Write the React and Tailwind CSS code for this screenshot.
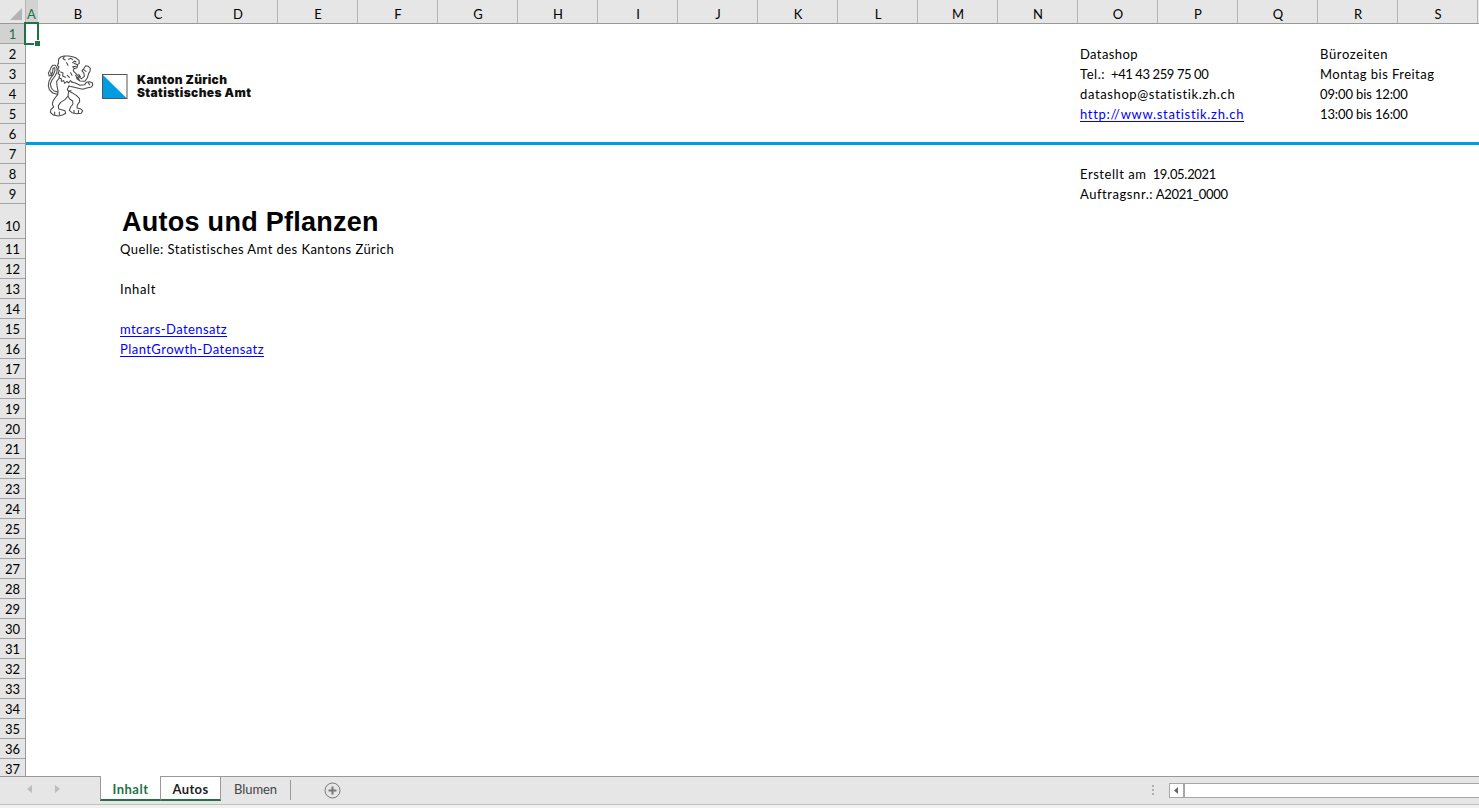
const COLUMNS = 'ABCDEFGHIJKLMNOPQRS'.split('');
const ROWS = Array.from({ length: 37 }, (_, i) => i + 1);

const CELLS = {
  2: [
    { text: 'Datashop', place: 'col-start-15', spacing: 'tracking-[0.38px]' },
    { text: 'Bürozeiten', place: 'col-start-18', spacing: 'tracking-[0.65px]' },
  ],
  3: [
    { label: 'Tel.:', text: '  +41 43 259 75 00', place: 'col-start-15', spacing: 'tracking-[-0.4px]' },
    { text: 'Montag bis Freitag', place: 'col-start-18', spacing: 'tracking-[0.46px]' },
  ],
  4: [
    { text: 'datashop@statistik.zh.ch', place: 'col-start-15', spacing: 'tracking-[0.62px]' },
    { text: '09:00 bis 12:00', place: 'col-start-18', spacing: 'tracking-[-0.12px]' },
  ],
  5: [
    { text: 'http://www.statistik.zh.ch', place: 'col-start-15', spacing: 'tracking-[0.68px]', link: true },
    { text: '13:00 bis 16:00', place: 'col-start-18', spacing: 'tracking-[-0.12px]' },
  ],
  8: [{ label: 'Erstellt am', text: '  19.05.2021', place: 'col-start-15', spacing: 'tracking-[-0.3px]' }],
  9: [{ label: 'Auftragsnr.:', text: ' A2021_0000', place: 'col-start-15', spacing: 'tracking-[-0.31px]' }],
  10: [{ text: 'Autos und Pflanzen', place: 'col-start-3', title: true }],
  11: [{ text: 'Quelle: Statistisches Amt des Kantons Zürich', place: 'col-start-3', spacing: 'tracking-[0.45px]' }],
  13: [{ text: 'Inhalt', place: 'col-start-3', spacing: 'tracking-[0.65px]' }],
  15: [{ text: 'mtcars-Datensatz', place: 'col-start-3', spacing: 'tracking-[0.42px]', link: true }],
  16: [{ text: 'PlantGrowth-Datensatz', place: 'col-start-3', spacing: 'tracking-[0.45px]', link: true }],
};

function Cell({ label, text, place, link, title, spacing = '' }) {
  if (title) {
    return (
      <span className={`${place} pl-1 font-['Liberation_Sans',sans-serif] text-[27px] leading-[36px] font-bold tracking-[0.27px] whitespace-pre`}>
        {text}
      </span>
    );
  }
  return (
    <span className={`${place} ${spacing} pl-0.5 leading-[20px] whitespace-pre`}>
      {label && <span className="tracking-[0.56px]">{label}</span>}
      {link ? (
        <a className="text-[#0000ff] underline decoration-1 underline-offset-[2px] [text-decoration-skip-ink:none]">{text}</a>
      ) : (
        text
      )}
    </span>
  );
}

function ColumnHeaders() {
  return (
    <div className="flex h-6 shrink-0 border-b border-[#999] bg-[#e6e6e6] text-center">
      <div className="flex w-[26px] shrink-0 items-end justify-end border-r border-[#b5b5b5] pr-[3px] pb-[3px]">
        <svg width="12" height="12" viewBox="0 0 12 12">
          <path d="M12 0V12H0Z" fill="#b3b3b3" />
        </svg>
      </div>
      {COLUMNS.map((c) => (
        <div
          key={c}
          className={
            c === 'A'
              ? 'w-3 shrink-0 bg-[#d2d2d2] pt-1 pr-px leading-[20px] text-[#217346]'
              : 'w-20 shrink-0 border-r border-[#b5b5b5] pt-1 pl-px leading-[20px]'
          }
        >
          {c}
        </div>
      ))}
      <div className="w-px" />
    </div>
  );
}

function Lion() {
  return (
    <svg width="60" height="72" viewBox="0 0 180 216" fill="none" stroke="#4a4a4a" strokeWidth="3.2" strokeLinejoin="round" strokeLinecap="round">
      <path d="M55 40L56 27L62 21L72 18L86 18L98 20L108 24L117 31L118 40L112 44L102 40M98 38L104 33L108 36" />
      <path d="M113 46L111 53L103 56L98 50L109 49M100 58L101 64L108 71L116 80L124 86" />
      <path d="M73 20L69 26L76 30M86 28L93 25L98 29M80 38L84 46" />
      <path d="M55 40L52 47L57 51L53 58L58 62L54 71L60 74L57 83L64 86L64 94L71 92L74 100L81 94L86 99L91 92L96 96" />
      <path d="M62 66L69 69L68 78L76 82M82 76L88 82M92 68L96 76" />
      <path d="M124 86L133 80L132 70L126 62L132 55L137 47L145 49L151 55L150 64L146 70L142 84L134 94L120 93L110 86M131 59L138 64M116 73L121 80L113 82L118 90M107 76L112 87" />
      <path d="M95 96L106 99L120 106L134 104L139 97L148 95L157 98L158 106L152 112L140 114L128 118L112 114L96 110L86 108M145 99L149 104" />
      <path d="M54 126L42 123L34 114L31 102L36 90L45 78L51 66L51 54L46 46L38 46L33 53L30 61L25 69L28 78L34 76L32 66M34 76L38 66L39 55L44 53L45 62L40 74L32 84L27 94L25 107L28 119L38 129L52 133" />
      <path d="M58 84L50 94L51 108L54 122L53 134L45 144L39 154L37 163L41 171L33 178L31 187L40 195L55 198L68 195L77 190L75 182L65 179L56 177L55 167L62 157L75 149L84 138L86 123" />
      <path d="M86 123L96 128L109 136L118 145L119 155L112 165L111 174L121 176L128 182L124 190L110 191L96 188L88 181L92 171L99 162L98 153L89 147L84 139" />
      <path d="M87 108L82 118L86 124L93 122M44 186L44 194M58 186L58 194M102 181L102 188M116 181L115 189" />
    </svg>
  );
}

function Letterhead() {
  return (
    <div className="absolute top-[26px] left-[14px] flex">
      <Lion />
      <svg className="mt-6 ml-0.5" width="26" height="25" viewBox="0 0 26 25">
        <rect x=".5" y=".5" width="24.5" height="24" fill="#fff" stroke="#555" />
        <path d="M1 1L24.5 24H1Z" fill="#009ee0" />
      </svg>
      <p className="mt-[23px] ml-[9px] flex flex-col font-['Inter',sans-serif] text-[12px] leading-[13px] font-black whitespace-nowrap text-[#111]">
        <span className="tracking-[0.3px]">Kanton Zürich</span>
        <span className="tracking-[0.36px]">Statistisches Amt</span>
      </p>
    </div>
  );
}

function TabBar() {
  return (
    <div className="flex h-8 shrink-0 flex-col bg-[#f0f0f0] text-[13px] leading-[26px]">
      <div className="flex h-[29px] border-b border-[#c0c0c0] bg-[#e6e6e6]">
        <div className="flex w-[100px] shrink-0 items-center gap-[23px] border-t border-[#999] pb-1 pl-[27px]">
          <svg width="5" height="8" viewBox="0 0 5 8"><path d="M5 0V8L0 4Z" fill="#bdbdbd" /></svg>
          <svg width="5" height="8" viewBox="0 0 5 8"><path d="M0 0V8L5 4Z" fill="#bdbdbd" /></svg>
        </div>
        <div className="h-[25px] w-[60px] shrink-0 border-b-2 border-l border-b-[#217346] border-l-[#999] bg-white text-center font-bold tracking-[0.5px] text-[#217346]">
          Inhalt
        </div>
        <div className="h-[25px] w-[61px] shrink-0 border-x border-t border-b-2 border-[#999] border-b-[#217346] bg-white text-center leading-[25px] font-bold tracking-[0.35px] text-[#222]">
          Autos
        </div>
        <div className="flex grow items-start border-t border-[#999]">
          <div className="mt-[3px] h-5 w-[70px] border-r border-[#999] text-center leading-[19px] tracking-[-0.1px] text-[#444]">Blumen</div>
          <svg className="mt-[5px] ml-[33px]" width="17" height="17" viewBox="0 0 17 17" fill="none" stroke="#777">
            <circle cx="8.5" cy="8.5" r="7.5" />
            <path d="M8.5 4.5V12.5M4.5 8.5H12.5" strokeWidth="2" />
          </svg>
          <div className="mt-2 ml-auto flex flex-col gap-0.5 pr-[15px]">
            <i className="size-0.5 bg-[#b0b0b0]" />
            <i className="size-0.5 bg-[#b0b0b0]" />
            <i className="size-0.5 bg-[#b0b0b0]" />
          </div>
          <div className="mt-[6px] flex h-[15px] w-[310px] shrink-0 border-y border-l border-[#a6a6a6] bg-white">
            <div className="flex w-[15px] items-center justify-center border-r-2 border-[#a6a6a6] pr-px">
              <svg width="4" height="7" viewBox="0 0 4 7"><path d="M4 0V7L0 3.5Z" fill="#666" /></svg>
            </div>
          </div>
        </div>
      </div>
    </div>
  );
}

export default function App() {
  return (
    <div className="flex h-[808px] w-[1479px] flex-col overflow-hidden bg-white font-['Lato',sans-serif] text-[13px] text-black">
      <ColumnHeaders />
      <div className="flex h-[752px] shrink-0">
        <div className="flex w-[26px] shrink-0 flex-col overflow-hidden border-r border-[#999] bg-[#e6e6e6] text-center">
          {ROWS.map((n) => (
            <div
              key={n}
              className={`flex shrink-0 items-end justify-center border-b border-[#a5a5a5] leading-[18px] ${n === 10 ? 'h-[35px] pb-[3px]' : 'h-5'} ${n === 1 ? 'bg-[#d2d2d2] text-[#217346]' : ''}`}
            >
              {n}
            </div>
          ))}
        </div>
        <div className="relative flex grow flex-col">
          {ROWS.slice(0, 36).map((n) => (
            <div
              key={n}
              className={`grid shrink-0 grid-cols-[12px_repeat(18,80px)] ${n === 10 ? 'h-[35px]' : 'h-5'}`}
            >
              {(CELLS[n] || []).map((cell) => (
                <Cell key={cell.text} {...cell} />
              ))}
            </div>
          ))}
          <div className="absolute top-[118px] left-0 h-[3px] w-full bg-[#009ee0]" />
          <Letterhead />
          <div className="absolute -top-0.5 -left-0.5 h-[23px] w-[15px] border-2 border-[#217346]">
            <div className="absolute -right-[3px] -bottom-[3px] size-[6px] border-t border-l border-white bg-[#217346]" />
          </div>
        </div>
      </div>
      <TabBar />
    </div>
  );
}
